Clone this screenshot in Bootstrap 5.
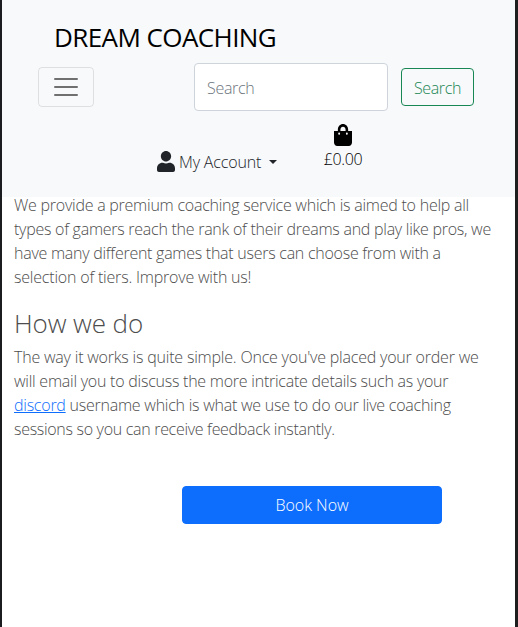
<!DOCTYPE html>
<html lang="en">
<head>
<meta charset="utf-8">
<meta name="viewport" content="width=device-width, initial-scale=1">
<title>Dream Coaching</title>
<link href="https://cdn.jsdelivr.net/npm/bootstrap@5.3.0/dist/css/bootstrap.min.css" rel="stylesheet">
<style>
body{font-family:"Open Sans","Noto Sans",sans-serif;font-weight:300;color:#212529;background:#fff}
.page-frame{height:627px;border-left:2px solid #1b1c20;border-right:3px solid #1e1e1e;overflow:hidden}
.site-header{height:197px;background:#f8f9fb}
.brand-title{font-size:26px;line-height:36px;padding:19px 0 0 52px;height:63px;color:#000;font-weight:400;letter-spacing:-.58px}
.tools-row{height:48px;padding-left:36px}
.menu-btn{width:56px;height:40px;padding:0;border:1px solid rgba(0,0,0,.1);border-radius:4px;line-height:1}
.search-box{width:194px;height:48px;margin-left:100px;border-radius:4px;font-weight:300;border-color:#ced4da;letter-spacing:-.3px;padding-top:8px}
.search-box::placeholder{color:#6c757d}
.search-btn{width:73px;height:38px;margin-left:13px;border-radius:4px;padding:1px 0 0;font-weight:300;letter-spacing:-.35px}
.account-row{padding:13px 0 0 155px}
.account-link{margin-top:26px;line-height:24px;width:120px;letter-spacing:-.15px}
.account-link svg{flex:none;margin-top:1px}
.bag-link{margin-left:46px;width:40px;line-height:26px;color:#000;letter-spacing:-.4px}
.copy{padding:0 12px;margin-top:-4px;color:#4d4d4d}
.copy p{line-height:24px;letter-spacing:-.24px}
.copy h2{font-size:26px;line-height:32px;font-weight:300;padding-top:2px;margin-bottom:6px;letter-spacing:-.1px}
.copy a{color:#0d6efd}
.tight-1{letter-spacing:-.2px}
.tight-2{letter-spacing:-.26px}
.tight-3{letter-spacing:-.3px}
.book-btn{width:260px;height:38px;margin:45px 0 0 180px;padding:0;border-radius:4px;font-weight:300;line-height:37px}
</style>
</head>
<body>
<div class="page-frame">
<header class="site-header">
  <div class="brand-title text-nowrap"><span>DREAM COACHING</span></div>
  <div class="tools-row d-flex align-items-center">
    <button class="btn menu-btn" aria-label="Menu"><svg width="30" height="30" viewBox="0 0 30 30" stroke="rgba(0,0,0,.55)" stroke-width="2" stroke-linecap="round"><path d="M4 7h22M4 15h22M4 23h22"/></svg></button>
    <input class="form-control search-box" placeholder="Search">
    <button class="btn btn-outline-success search-btn"><span>Search</span></button>
  </div>
  <div class="account-row d-flex text-nowrap">
    <div class="account-link d-flex align-items-start">
      <svg width="18" height="21" viewBox="0 0 448 512" fill="#212529" preserveAspectRatio="none"><path d="M224 256c71 0 128-57 128-128S295 0 224 0 96 57 96 128s57 128 128 128zm90 32h-17c-22 10-47 16-73 16s-51-6-73-16h-17C60 288 0 348 0 422v42c0 27 21 48 48 48h352c27 0 48-21 48-48v-42c0-74-60-134-134-134z"/></svg>
      <span class="ms-1 dropdown-toggle"><span>My Account </span></span>
    </div>
    <div class="bag-link d-flex flex-column align-items-center">
      <svg width="18" height="22" viewBox="0 0 448 512" preserveAspectRatio="none"><path d="M352 160v-32C352 57 295 0 224 0S96 57 96 128v32H0v272c0 44 36 80 80 80h288c44 0 80-36 80-80V160zm-192-32c0-35 29-64 64-64s64 29 64 64v32H160zm160 120a24 24 0 1 1 0-48 24 24 0 0 1 0 48zm-192 0a24 24 0 1 1 0-48 24 24 0 0 1 0 48z"/></svg>
      <span>£0.00</span>
    </div>
  </div>
</header>
<main class="copy position-relative text-nowrap">
  <p class="mb-3"><span>We provide a premium coaching service which is aimed to help all</span><br><span class="tight-2">types of gamers reach the rank of their dreams and play like pros, we</span><br><span class="tight-2">have many different games that users can choose from with a</span><br><span class="tight-1">selection of tiers. Improve with us!</span></p>
  <h2><span>How we do</span></h2>
  <p class="mb-0"><span class="tight-1">The way it works is quite simple. Once you've placed your order we</span><br><span>will email you to discuss the more intricate details such as your</span><br><span><a href="#">discord</a> username which is what we use to do our live coaching</span><br><span class="tight-3">sessions so you can receive feedback instantly.</span></p>
</main>
<a class="btn btn-primary book-btn" href="#">Book Now</a>
</div>
<script src="https://cdn.jsdelivr.net/npm/bootstrap@5.3.0/dist/js/bootstrap.bundle.min.js"></script>
</body>
</html>
